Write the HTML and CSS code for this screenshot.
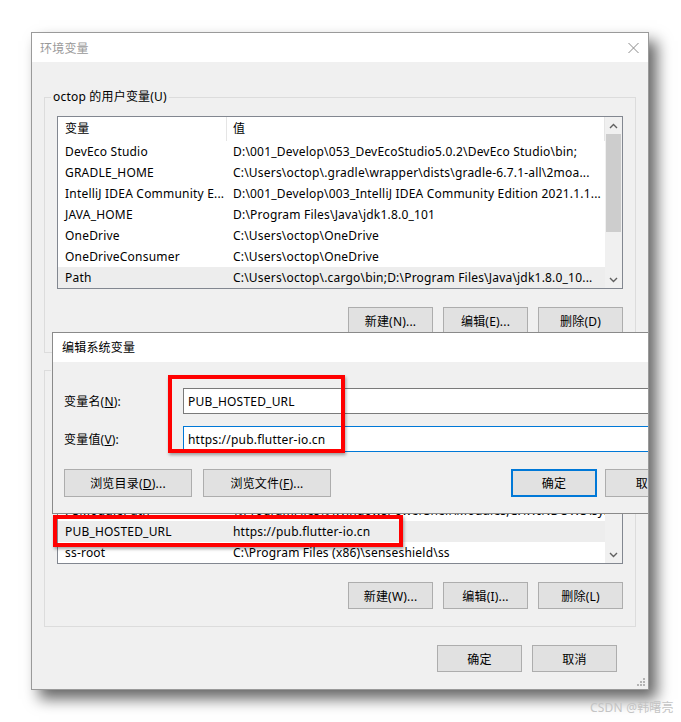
FILE: index.html
```html
<!DOCTYPE html>
<html lang="zh-CN">
<head>
  <meta charset="UTF-8" />
  <title>环境变量</title>
  <link rel="stylesheet" href="styles.css">
</head>
<body>
  <div class="stage">

    <!-- main window -->
    <div class="env-window">
      <div class="titlebar">
        <span class="title inactive">环境变量</span>
        <svg class="close" width="11" height="10" viewBox="0 0 11 10">
          <path d="M0.5 0 L10.5 10 M10.5 0 L0.5 10" stroke="#8a8a8a" stroke-width="1" fill="none"/>
        </svg>
      </div>

      <div class="env-body">
        <div class="group user-group">
          <span class="group-title">octop 的用户变量(U)</span>
          <div class="list">
            <div class="list-main">
              <div class="list-head">
                <span class="c1">变量</span>
                <span class="c2">值</span>
              </div>
              <div class="row"><span class="c1">DevEco Studio</span><span class="c2">D:\001_Develop\053_DevEcoStudio5.0.2\DevEco Studio\bin;</span></div>
              <div class="row"><span class="c1">GRADLE_HOME</span><span class="c2">C:\Users\octop\.gradle\wrapper\dists\gradle-6.7.1-all\2moa...</span></div>
              <div class="row"><span class="c1">IntelliJ IDEA Community E...</span><span class="c2">D:\001_Develop\003_IntelliJ IDEA Community Edition 2021.1.1...</span></div>
              <div class="row"><span class="c1">JAVA_HOME</span><span class="c2">D:\Program Files\Java\jdk1.8.0_101</span></div>
              <div class="row"><span class="c1">OneDrive</span><span class="c2">C:\Users\octop\OneDrive</span></div>
              <div class="row"><span class="c1">OneDriveConsumer</span><span class="c2">C:\Users\octop\OneDrive</span></div>
              <div class="row selected"><span class="c1">Path</span><span class="c2">C:\Users\octop\.cargo\bin;D:\Program Files\Java\jdk1.8.0_10...</span></div>
            </div>
            <div class="scroll">
              <div class="arrow"><svg width="9" height="6" viewBox="0 0 9 6"><path d="M1 5 L4.5 1.5 L8 5" stroke="#606060" stroke-width="1.4" fill="none"/></svg></div>
              <div class="thumb user-thumb"></div>
              <div class="track"></div>
              <div class="arrow"><svg width="9" height="6" viewBox="0 0 9 6"><path d="M1 1 L4.5 4.5 L8 1" stroke="#606060" stroke-width="1.4" fill="none"/></svg></div>
            </div>
          </div>
          <div class="btn-row">
            <button class="btn">新建(N)...</button>
            <button class="btn">编辑(E)...</button>
            <button class="btn">删除(D)</button>
          </div>
        </div>

        <div class="group sys-group">
          <span class="group-title">系统变量(S)</span>
          <div class="list">
            <div class="list-main">
              <div class="list-head">
                <span class="c1">变量</span>
                <span class="c2">值</span>
              </div>
              <div class="row"><span class="c1">PROCESSOR_ARCHITECTURE</span><span class="c2">AMD64</span></div>
              <div class="row"><span class="c1">PROCESSOR_IDENTIFIER</span><span class="c2">Intel64 Family 6 Model 154 Stepping 3, GenuineIntel</span></div>
              <div class="row"><span class="c1">PROCESSOR_LEVEL</span><span class="c2">6</span></div>
              <div class="row"><span class="c1">PROCESSOR_REVISION</span><span class="c2">9a03</span></div>
              <div class="row"><span class="c1">PSModulePath</span><span class="c2">%ProgramFiles%\WindowsPowerShell\Modules;C:\WINDOWS\system32\Windo...</span></div>
              <div class="row selected"><span class="c1">PUB_HOSTED_URL</span><span class="c2">https://pub.flutter-io.cn</span></div>
              <div class="row"><span class="c1">ss-root</span><span class="c2">C:\Program Files (x86)\senseshield\ss</span></div>
            </div>
            <div class="scroll">
              <div class="arrow"><svg width="9" height="6" viewBox="0 0 9 6"><path d="M1 5 L4.5 1.5 L8 5" stroke="#606060" stroke-width="1.4" fill="none"/></svg></div>
              <div class="track sys-track-top"></div>
              <div class="thumb sys-thumb"></div>
              <div class="track"></div>
              <div class="arrow"><svg width="9" height="6" viewBox="0 0 9 6"><path d="M1 1 L4.5 4.5 L8 1" stroke="#606060" stroke-width="1.4" fill="none"/></svg></div>
            </div>
          </div>
          <div class="btn-row">
            <button class="btn">新建(W)...</button>
            <button class="btn">编辑(I)...</button>
            <button class="btn">删除(L)</button>
          </div>
        </div>

        <div class="btn-row footer">
          <button class="btn">确定</button>
          <button class="btn">取消</button>
        </div>

        <svg class="grip" width="8" height="8" viewBox="0 0 8 8">
          <rect x="6" y="0" width="2" height="2" fill="#b4b4b4"/>
          <rect x="3" y="3" width="2" height="2" fill="#b4b4b4"/>
          <rect x="6" y="3" width="2" height="2" fill="#b4b4b4"/>
          <rect x="0" y="6" width="2" height="2" fill="#b4b4b4"/>
          <rect x="3" y="6" width="2" height="2" fill="#b4b4b4"/>
          <rect x="6" y="6" width="2" height="2" fill="#b4b4b4"/>
        </svg>
      </div>

      <!-- edit dialog on top of the main window -->
      <div class="edit-dialog">
        <div class="edit-titlebar">编辑系统变量</div>
        <div class="edit-body">
          <div class="field">
            <label class="field-label" for="varName">变量名(<span class="key">N</span>):</label>
            <input class="field-input" id="varName" type="text" value="PUB_HOSTED_URL" readonly />
          </div>
          <div class="field">
            <label class="field-label" for="varValue">变量值(<span class="key">V</span>):</label>
            <input class="field-input focused" id="varValue" type="text" value="https://pub.flutter-io.cn" readonly />
          </div>
          <div class="edit-buttons">
            <button class="btn wide">浏览目录(<span class="key">D</span>)...</button>
            <button class="btn wide">浏览文件(<span class="key">F</span>)...</button>
            <button class="btn mid ok">确定</button>
            <button class="btn mid">取消</button>
          </div>
        </div>
      </div>
    </div>

    <div class="mark mark-inputs"></div>
    <div class="mark mark-row"></div>
    <div class="watermark">CSDN @韩曙亮</div>
  </div>
</body>
</html>
```

FILE: styles.css
```css
body {
  margin: 0;
  background: #fff;
  font-family: "Noto Sans", "Noto Sans CJK SC", sans-serif;
  font-size: 12px;
  letter-spacing: 0.2px;
  color: #000;
}
.stage {
  position: relative;
  width: 681px;
  height: 722px;
  overflow: hidden;
}

/* main window */
.env-window {
  position: relative;
  margin: 32px 0 0 31px;
  width: 618px;
  height: 658px;
  box-sizing: border-box;
  border: 1px solid #9a9a9a;
  background: #f0f0f0;
  box-shadow: 8px 9px 14px rgba(0, 0, 0, 0.6);
  overflow: hidden;
  display: flex;
  flex-direction: column;
}
.titlebar {
  height: 29px;
  flex: none;
  background: #fff;
  display: flex;
  align-items: center;
  justify-content: space-between;
  padding: 0 9px 0 8px;
}
.title.inactive {
  color: #999;
}
.env-body {
  flex: 1;
  position: relative;
  padding: 0 12px;
}

/* group boxes */
.group {
  position: relative;
  border: 1px solid #dcdcdc;
  padding: 18px 12px 18px;
}
.user-group {
  margin-top: 35px;
}
.sys-group {
  margin-top: 17px;
  padding-top: 20px;
  padding-bottom: 17px;
}
.group-title {
  position: absolute;
  left: 6px;
  top: -9px;
  line-height: 16px;
  padding: 0 2px;
  background: #f0f0f0;
}

/* list views */
.list {
  height: 173px;
  box-sizing: border-box;
  border: 1px solid #828790;
  background: #fff;
  display: flex;
}
.list-main {
  flex: 1;
  min-width: 0;
}
.list-head {
  height: 24px;
  line-height: 23px;
  display: flex;
}
.list-head .c1 {
  border-right: 1px solid #e5e5e5;
}
.list-head .c2 {
  flex: 1;
  border-right: 1px solid #e5e5e5;
}
.row {
  height: 21px;
  line-height: 21px;
  display: flex;
  white-space: nowrap;
  overflow: hidden;
}
.row.selected {
  background: #ededed;
}
.c1 {
  width: 169px;
  flex: none;
  box-sizing: border-box;
  padding-left: 7px;
  overflow: hidden;
  white-space: nowrap;
}
.c2 {
  padding-left: 6px;
  white-space: nowrap;
  overflow: hidden;
}
.scroll {
  width: 17px;
  flex: none;
  background: #f0f0f0;
  display: flex;
  flex-direction: column;
}
.arrow {
  height: 17px;
  display: flex;
  align-items: center;
  justify-content: center;
}
.thumb {
  margin: 0 1px;
  background: #cdcdcd;
}
.user-thumb {
  height: 98px;
}
.sys-track-top {
  height: 20px;
}
.sys-thumb {
  height: 70px;
}
.track {
  flex: 1;
}

/* buttons */
.btn-row {
  display: flex;
  justify-content: flex-end;
  gap: 10px;
  margin-top: 18px;
}
.btn {
  width: 85px;
  height: 27px;
  box-sizing: border-box;
  border: 1px solid #adadad;
  background: #e1e1e1;
  color: #000;
  font: inherit;
  letter-spacing: inherit;
  padding: 0;
}
.key {
  text-decoration: underline;
}
.footer {
  padding-right: 19px;
}
.grip {
  position: absolute;
  right: 3px;
  bottom: 3px;
}

/* edit dialog */
.edit-dialog {
  position: absolute;
  left: 20px;
  top: 299px;
  width: 651px;
  height: 182px;
  box-sizing: border-box;
  border: 1px solid #8a8a8a;
  background: #f0f0f0;
  display: flex;
  flex-direction: column;
}
.edit-titlebar {
  height: 29px;
  line-height: 29px;
  background: #fff;
  padding-left: 9px;
}
.edit-body {
  padding: 26px 11px 0;
}
.field {
  display: flex;
  align-items: center;
  margin-bottom: 12px;
}
.field-label {
  width: 119px;
  flex: none;
}
.field-input {
  flex: 1;
  height: 26px;
  box-sizing: border-box;
  border: 1px solid #7a7a7a;
  padding: 0 4px;
  font: inherit;
  letter-spacing: inherit;
  color: #000;
  background: #fff;
  outline: none;
}
.field-input.focused {
  border-color: #0078d7;
}
.edit-buttons {
  display: flex;
  gap: 11px;
  margin-top: 17px;
}
.btn.wide {
  width: 128px;
  height: 28px;
}
.btn.mid {
  width: 86px;
  height: 28px;
}
.btn.ok {
  margin-left: auto;
  margin-right: -3px;
  border: 2px solid #0078d7;
}

/* red annotation frames */
.mark {
  position: absolute;
  box-sizing: border-box;
  border: 4px solid #ff0000;
  box-shadow: 1px 2px 3px rgba(0, 0, 0, 0.35);
}
.mark-inputs {
  left: 168px;
  top: 375px;
  width: 177px;
  height: 78px;
}
.mark-row {
  left: 53px;
  top: 515px;
  width: 350px;
  height: 32px;
}
.watermark {
  position: absolute;
  left: 590px;
  top: 700px;
  color: #c4c4c4;
  font-size: 12px;
  line-height: 16px;
}
```
